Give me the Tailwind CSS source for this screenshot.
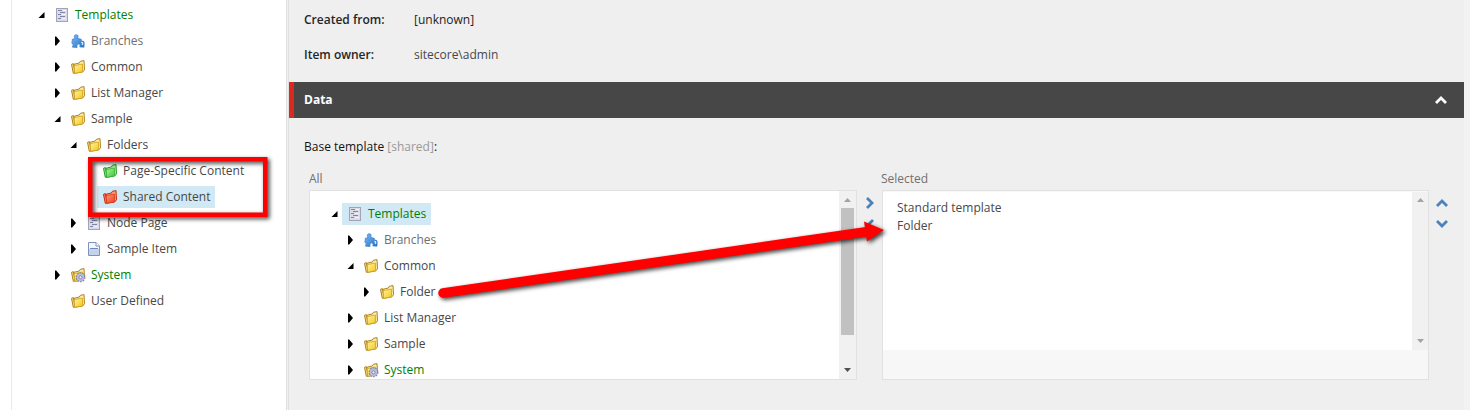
<!DOCTYPE html>
<html lang="en">
<head>
<meta charset="utf-8">
<title>Content Editor</title>
<script src="https://cdn.jsdelivr.net/npm/@tailwindcss/browser@4"></script>
</head>
<body class="relative h-[410px] w-[1470px] overflow-hidden bg-[#efefef] font-['Open_Sans',sans-serif] text-[12px] leading-[18px] text-[#474747]">
<svg class="absolute size-0">
  <linearGradient id="gold" x1="0" y1="0" x2="1" y2="1"><stop offset="0" stop-color="#fff5a0"/><stop offset="1" stop-color="#f4c61c"/></linearGradient>
  <linearGradient id="lime" x1="0" y1="0" x2="1" y2="1"><stop offset="0" stop-color="#b4f59a"/><stop offset="1" stop-color="#3cc23a"/></linearGradient>
  <linearGradient id="coral" x1="0" y1="0" x2="1" y2="1"><stop offset="0" stop-color="#ff9a78"/><stop offset="1" stop-color="#ee3d1c"/></linearGradient>
  <linearGradient id="sky" x1="0" y1="0" x2="1" y2="1"><stop offset="0" stop-color="#7db9f2"/><stop offset="1" stop-color="#2672c4"/></linearGradient>
  <symbol id="folder" viewBox="0 0 16 16">
    <path d="M1.500 5.300 3.400 4.600 5.200 13.800 3.300 14.300Z" fill="#f7e08a" stroke="#b0821a"/>
    <path d="M4.200 5.200 9.300 4 10.400 2.300 14 1.600 14.500 10.800 12.600 13 4.600 14.300Z" fill="#fbeeb0" stroke="#b0821a" stroke-linejoin="round"/>
    <path d="M4.200 6.600 12.400 5 12.600 12.900 4.500 14.300Z" fill="url(#gold)" stroke="#d0a01c" stroke-width=".8"/>
  </symbol>
  <symbol id="folder-green" viewBox="0 0 16 16">
    <path d="M1.500 5.300 3.400 4.600 5.200 13.800 3.300 14.300Z" fill="#9be885" stroke="#209a28"/>
    <path d="M4.200 5.200 9.300 4 10.400 2.300 14 1.600 14.500 10.800 12.600 13 4.600 14.300Z" fill="#a0ec8c" stroke="#209a28" stroke-linejoin="round"/>
    <path d="M4.200 6.600 12.400 5 12.600 12.900 4.500 14.300Z" fill="url(#lime)" stroke="#37b136" stroke-width=".8"/>
  </symbol>
  <symbol id="folder-red" viewBox="0 0 16 16">
    <path d="M1.500 5.300 3.400 4.600 5.200 13.800 3.300 14.300Z" fill="#ff8a66" stroke="#c42a10"/>
    <path d="M4.200 5.200 9.300 4 10.400 2.300 14 1.600 14.500 10.800 12.600 13 4.600 14.300Z" fill="#ff9c7c" stroke="#c42a10" stroke-linejoin="round"/>
    <path d="M4.200 6.600 12.400 5 12.600 12.900 4.500 14.300Z" fill="url(#coral)" stroke="#dc3a1c" stroke-width=".8"/>
  </symbol>
  <symbol id="folder-gear" viewBox="0 0 16 16">
    <use href="#folder"/>
    <circle cx="10.500" cy="10.300" r="4.300" fill="#a9adcb" stroke="#7e84ab" stroke-width="1.400" stroke-dasharray="1.600 1.100"/>
    <circle cx="10.500" cy="10.300" r="3.700" fill="#b9bdd8"/>
    <circle cx="10.500" cy="10.300" r="1.500" fill="#eef0fa" stroke="#7178a4" stroke-width=".8"/>
  </symbol>
  <symbol id="template" viewBox="0 0 16 16">
    <rect x="2.500" y="1.500" width="11" height="13" fill="#dcdce8" stroke="#a3a3b8"/>
    <path d="M4 3.500h4M6 5.500h5M4 7.500h3M6 9.500h5M4 11.500h3" stroke="#8083a8"/>
    <path d="M9 3.500h3M8 7.500h4M8 11.500h4" stroke="#f2f2f8"/>
  </symbol>
  <symbol id="page" viewBox="0 0 16 16">
    <path d="M2.500 1.500H10L13.500 5V14.500H2.500Z" fill="#f3f7fd" stroke="#8091b8"/>
    <path d="M3 8H13V14H3Z" fill="#c3d3ec"/>
    <path d="M4 7.500h8" stroke="#6f88b8"/>
    <path d="M10 1.500V5H13.500" fill="#fff" stroke="#8091b8"/>
  </symbol>
  <symbol id="puzzle" viewBox="0 0 16 16">
    <path d="M5 5.600C3.900 4.200 4 1.700 6.200 1.700S8.500 3.800 7.600 5.300L11.300 6.300 11.400 8.600C13 7.500 14.300 8.300 14.200 10L14 14.200 9.800 13.900C10.400 12.300 9.800 10.900 8.500 11S6.700 12.600 7.100 14.500L2.500 14.200 3.200 11.200C1.600 11 1.400 8.700 2.300 8.300L2.200 6.300Z" fill="url(#sky)" stroke="#3a80cc" stroke-width=".7"/>
    <path d="M11.300 9.800C12.800 9 13.300 10.500 12.100 11.800" fill="none" stroke="#e4f2ff" stroke-width="1.200"/>
  </symbol>
  <symbol id="open" viewBox="0 0 7 10"><path d="M6.500 2V8H.5Z" fill="#000"/></symbol>
  <symbol id="closed" viewBox="0 0 7 10"><path d="M1 .5H2.200L6 5 2.200 9.500H1Z" fill="#000"/></symbol>
</svg>

<div class="flex h-full">
  <!-- content tree -->
  <aside class="h-full w-[289px] shrink-0 bg-white pl-[11px]">
    <div class="flex h-full border-l border-[#e9e9e9]">
      <div class="flex h-full w-[274px] flex-col pt-[2px] [&>div]:flex [&>div]:h-[26px] [&>div]:shrink-0 [&>div]:items-center [&>div>svg]:mr-1 [&>div>svg]:h-[10px] [&>div>svg]:w-[7px] [&_span]:flex [&_span]:h-[22px] [&_span]:items-center [&_span]:gap-[5px] [&_span]:pr-1 [&_span]:pl-[5px] [&_span>svg]:size-4">
        <div class="pl-[26px]"><svg><use href="#open"/></svg><span class="text-[#008000]"><svg><use href="#template"/></svg>Templates</span></div>
        <div class="pl-[42px]"><svg><use href="#closed"/></svg><span class="text-[#707070]"><svg><use href="#puzzle"/></svg>Branches</span></div>
        <div class="pl-[42px]"><svg><use href="#closed"/></svg><span><svg><use href="#folder"/></svg>Common</span></div>
        <div class="pl-[42px]"><svg><use href="#closed"/></svg><span><svg><use href="#folder"/></svg>List Manager</span></div>
        <div class="pl-[42px]"><svg><use href="#open"/></svg><span><svg><use href="#folder"/></svg>Sample</span></div>
        <div class="pl-[58px]"><svg><use href="#open"/></svg><span><svg><use href="#folder"/></svg>Folders</span></div>
        <div class="pl-[85px]"><span><svg><use href="#folder-green"/></svg>Page-Specific Content</span></div>
        <div class="pl-[85px]"><span class="bg-[#d0e9f5]"><svg><use href="#folder-red"/></svg>Shared Content</span></div>
        <div class="pl-[58px]"><svg><use href="#closed"/></svg><span><svg><use href="#template"/></svg>Node Page</span></div>
        <div class="pl-[58px]"><svg><use href="#closed"/></svg><span><svg><use href="#page"/></svg>Sample Item</span></div>
        <div class="pl-[42px]"><svg><use href="#closed"/></svg><span class="text-[#008000]"><svg><use href="#folder-gear"/></svg>System</span></div>
        <div class="pl-[53px]"><span><svg><use href="#folder"/></svg>User Defined</span></div>
      </div>
      <div class="w-[3px] border-x border-[#e0e0e0] bg-[#f0f0f0]"></div>
    </div>
  </aside>

  <!-- item fields -->
  <main class="h-full w-[1175px] shrink-0">
    <div class="h-[82px] pt-[11px] pl-[15px]">
      <div class="flex h-[35px]"><div class="w-[110px] font-semibold text-[#262626]">Created from:</div><div class="text-[#222]">[unknown]</div></div>
      <div class="flex"><div class="w-[110px] font-semibold text-[#262626]">Item owner:</div><div>sitecore\admin</div></div>
    </div>
    <div class="flex h-9 items-center justify-between border-l-[5px] border-[#dc291e] bg-[#474747] pr-[17px] pl-[10px] font-bold text-white">
      Data
      <svg class="h-[8px] w-[12px]" viewBox="0 0 12 8" fill="none" stroke="#fff" stroke-width="2.800"><path d="M1 7 6 2 11 7"/></svg>
    </div>
    <div class="pt-5 pl-[15px] text-[#131313]">Base template <span class="text-[#999]">[shared]</span>:</div>
    <div class="flex pt-[14px] pl-[20px] text-[#707070]">
      <div class="w-[548px]">
        <div class="h-5">All</div>
        <div class="flex h-[190px] overflow-hidden border border-[#e1e1e1] bg-white text-[#474747]">
          <div class="flex-1 pt-[10px] [&>div]:flex [&>div]:h-[26px] [&>div]:items-center [&>div>svg]:mr-1 [&>div>svg]:h-[10px] [&>div>svg]:w-[7px] [&_span]:flex [&_span]:h-[22px] [&_span]:items-center [&_span]:gap-[5px] [&_span]:px-[5px] [&_span>svg]:size-4">
            <div class="pl-[21px]"><svg><use href="#open"/></svg><span class="bg-[#d0e9f5] text-[#008000]"><svg><use href="#template"/></svg>Templates</span></div>
            <div class="pl-[37px]"><svg><use href="#closed"/></svg><span class="text-[#707070]"><svg><use href="#puzzle"/></svg>Branches</span></div>
            <div class="pl-[37px]"><svg><use href="#open"/></svg><span><svg><use href="#folder"/></svg>Common</span></div>
            <div class="pl-[53px]"><svg><use href="#closed"/></svg><span><svg><use href="#folder"/></svg>Folder</span></div>
            <div class="pl-[37px]"><svg><use href="#closed"/></svg><span><svg><use href="#folder"/></svg>List Manager</span></div>
            <div class="pl-[37px]"><svg><use href="#closed"/></svg><span><svg><use href="#folder"/></svg>Sample</span></div>
            <div class="pl-[37px]"><svg><use href="#closed"/></svg><span class="text-[#008000]"><svg><use href="#folder-gear"/></svg>System</span></div>
          </div>
          <div class="flex w-[17px] flex-col items-center justify-between bg-[#f1f1f1] pb-[7px]">
            <div class="flex flex-col items-center">
              <svg class="mt-[7px] mb-[6px] h-1 w-[7px]"><path d="M0 4 3.500 0 7 4Z" fill="#a3a3a3"/></svg>
              <div class="h-[127px] w-[13px] bg-[#c1c1c1]"></div>
            </div>
            <svg class="h-1 w-[7px]"><path d="M0 0H7L3.500 4Z" fill="#505050"/></svg>
          </div>
        </div>
      </div>
      <div class="flex w-[25px] flex-col items-center gap-[10px] pt-[27px]">
        <svg class="h-[12px] w-[8px]" viewBox="0 0 8 12" fill="none" stroke="#4c82bc" stroke-width="2.800"><path d="M1 1 6 6 1 11"/></svg>
        <svg class="h-[12px] w-[8px]" viewBox="0 0 8 12" fill="none" stroke="#4c82bc" stroke-width="2.800"><path d="M7 1 2 6 7 11"/></svg>
      </div>
      <div class="w-[547px]">
        <div class="-ml-px h-5">Selected</div>
        <div class="h-[190px] border border-[#e1e1e1] bg-[#f7f7f7] text-[#474747]">
          <div class="flex h-[159px] justify-between border-t border-[#f7f7f7] bg-white">
            <div class="pt-[7px] pl-[14px]">Standard template<br>Folder</div>
            <div class="flex w-[16px] flex-col items-center justify-between bg-[#f1f1f1] pt-[6px] pb-[7px]">
              <svg class="h-1 w-[7px]"><path d="M0 4 3.500 0 7 4Z" fill="#a3a3a3"/></svg>
              <svg class="h-1 w-[7px]"><path d="M0 0H7L3.500 4Z" fill="#a3a3a3"/></svg>
            </div>
          </div>
        </div>
      </div>
      <div class="flex w-[26px] flex-col items-center gap-[13px] pt-[29px]">
        <svg class="h-[8px] w-[12px]" viewBox="0 0 12 8" fill="none" stroke="#4c82bc" stroke-width="2.800"><path d="M1 7 6 2 11 7"/></svg>
        <svg class="h-[8px] w-[12px]" viewBox="0 0 12 8" fill="none" stroke="#4c82bc" stroke-width="2.800"><path d="M1 1 6 6 11 1"/></svg>
      </div>
    </div>
  </main>
  <div class="flex-1 bg-[#f2f2f2]"></div>
</div>

<!-- annotations over the page -->
<svg class="pointer-events-none absolute inset-0 h-[410px] w-[1470px] drop-shadow-[2px_2px_2px_rgba(0,0,0,0.75)]" viewBox="0 0 1470 410">
  <rect x="90.250" y="159.250" width="175" height="55.500" fill="none" stroke="#fe0000" stroke-width="4.500"/>
  <path d="M443 293 868 231.500" stroke="#fe0000" stroke-width="9.500" stroke-linecap="round"/>
  <path d="M864 221.500 884 230 867 241.500Z" fill="#fe0000"/>
</svg>
</body>
</html>
